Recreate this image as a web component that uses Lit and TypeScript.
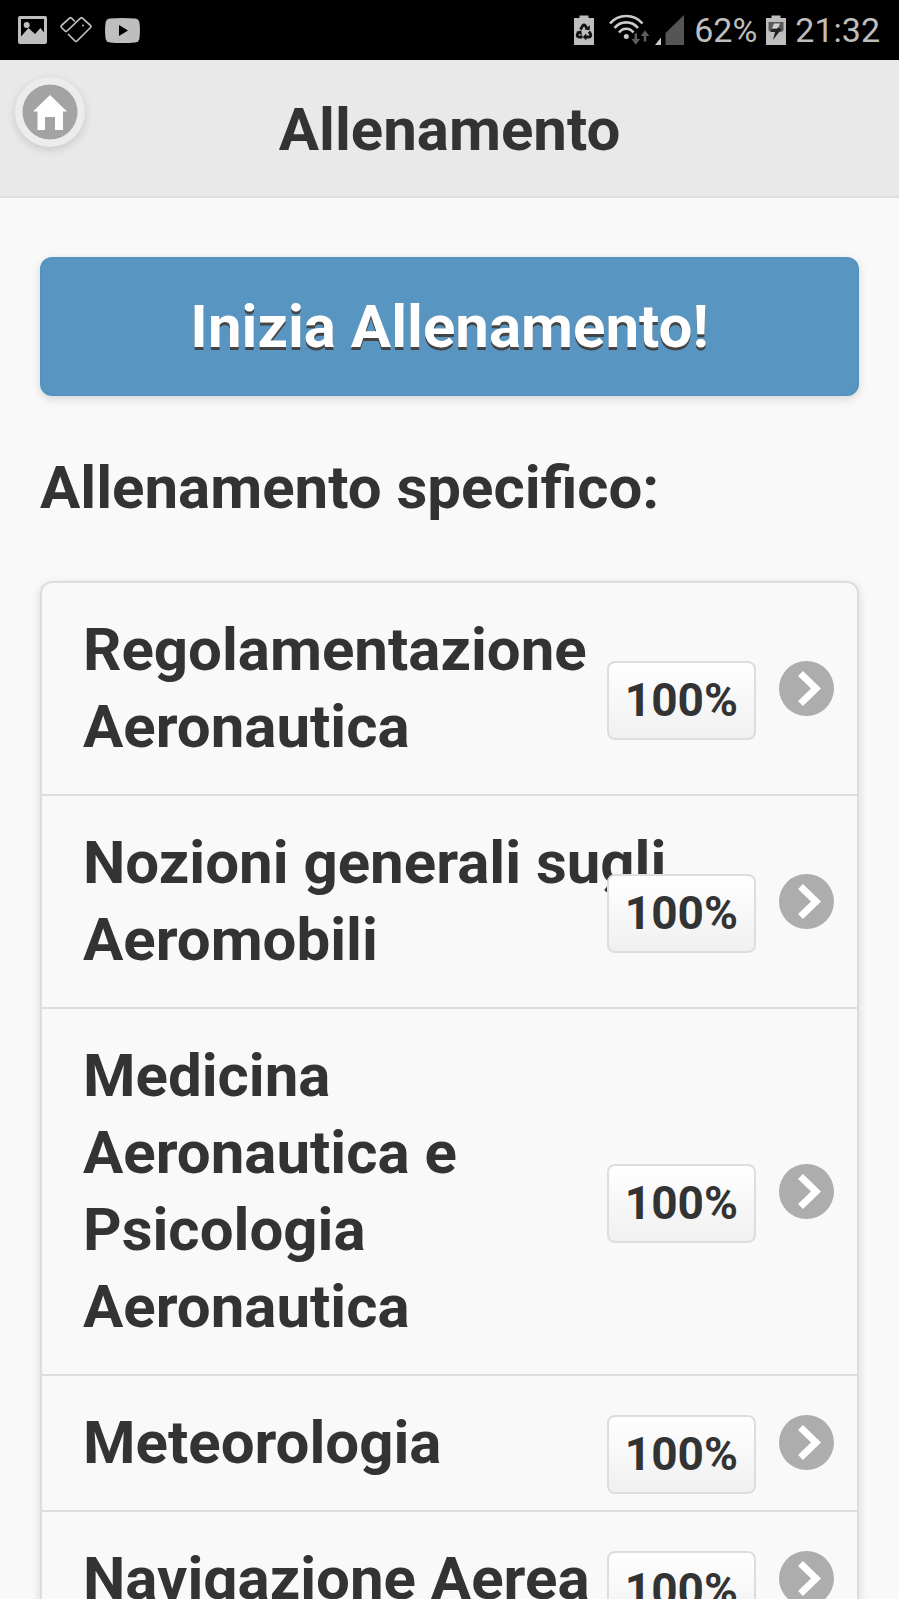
import { LitElement, html, css, svg } from "lit";
import { customElement, property } from "lit/decorators.js";

interface Topic {
  name: string;
  score: number;
}

const TOPICS: Topic[] = [
  { name: "Regolamentazione Aeronautica", score: 100 },
  { name: "Nozioni generali sugli Aeromobili", score: 100 },
  { name: "Medicina Aeronautica e Psicologia Aeronautica", score: 100 },
  { name: "Meteorologia", score: 100 },
  { name: "Navigazione Aerea", score: 100 },
];

const batteryShell = svg`<path fill="#bebebe" d="M5.500 0.500h9v2.500h5.500v27H0V3h5.500z" />`;

@customElement("status-bar")
export class StatusBar extends LitElement {
  static styles = css`
    :host {
      display: flex;
      flex: none;
      justify-content: space-between;
      align-items: center;
      height: 60px;
      padding: 0 19px 0 18px;
      box-sizing: border-box;
      background: #000;
      color: #bebebe;
      font-size: 34px;
      line-height: 40px;
    }
    .group {
      display: flex;
      align-items: center;
      gap: 13px;
    }
    .system {
      display: flex;
      align-items: center;
      gap: 9px;
    }
    .network {
      display: flex;
      gap: 5px;
    }
    .saver {
      margin-right: 5px;
    }
    svg {
      display: block;
    }
  `;

  render() {
    return html`
      <div class="group">
        <svg width="29" height="28" viewBox="0 0 29 28" aria-hidden="true">
          <rect width="29" height="28" rx="2" fill="#bebebe" />
          <path
            d="M3 3h23v13.500l-3.500-4.500-5.500 6-6.500-6L3 20.500z"
            fill="#000"
          />
          <circle cx="8.700" cy="9" r="3" fill="#bebebe" />
        </svg>
        <svg width="32" height="28" viewBox="1 0 32 28" fill="none" stroke="#bebebe" stroke-width="1.700" stroke-linejoin="round" stroke-linecap="round" aria-hidden="true">
          <path d="M15.500 5L12.500 2.200Q11.500 1.300 10.500 2.200L2.500 9.500Q1.500 10.500 2.500 11.500L6 15Q7 16 8 15L21.500 2.200Q22.500 1.300 23.500 2.200L31.500 9.500Q32.500 10.500 31.500 11.500L18 25Q17 26 16 25L9.500 18.500" />
          <circle cx="24" cy="9.500" r="1" fill="#bebebe" stroke="none" />
        </svg>
        <svg width="35" height="25" viewBox="0 0 35 25" aria-hidden="true">
          <path fill="#bebebe" d="M5 .5Q17.500-.5 30 .5Q34 .9 34.500 5Q35.400 12.500 34.500 20Q34 24 30 24.500Q17.500 25.500 5 24.500Q1 24 .5 20Q-.4 12.500 .5 5Q1 .9 5 .5z" />
          <path d="M14 7l9 5.500-9 5.500z" fill="#000" />
        </svg>
      </div>
      <div class="system">
        <svg class="saver" width="20" height="30" viewBox="0 0 20 30" aria-hidden="true">
          ${batteryShell}
          <g fill="none" stroke="#111" stroke-width="2.800">
            <path d="M6.500 14.500L8.800 10.600Q10 9 11.200 10.600L12.800 13.200" />
            <path d="M15 16.500L16.700 19.300Q17.300 21.800 15 22H11.500" />
            <path d="M8.500 22H5Q2.700 21.800 3.300 19.300L5 17" />
          </g>
          <path fill="#111" d="M10.500 14.500l5 .8.500-5zM12.300 18.200v7.400l-3.500-3.600zM2 17l5.200-1.800.8 5z" />
        </svg>
        <div class="network">
          <svg width="42" height="34" viewBox="0 0 42 34" aria-hidden="true">
            <g fill="none" stroke="#cbcbcb" stroke-width="2.700">
              <path d="M2 10.500C10.500 .5 26 .5 34.500 10.500" />
              <path d="M6.500 15C12.500 7.500 24 7.500 30 15" />
              <path d="M11 19.500C15 14.500 21.500 14.500 25.500 19.500" />
            </g>
            <circle cx="18.300" cy="23.500" r="2.500" fill="#cbcbcb" />
            <g fill="#5c5c5c">
              <path d="M26.500 20.500h2.600v5.500h3l-4.300 5.700-4.300-5.700h3z" />
              <path d="M35.700 28.500h2.600V23h3L37 17.300 32.700 23h3z" />
            </g>
          </svg>
          <svg width="30" height="34" viewBox="0 0 30 34" aria-hidden="true">
            <path d="M0 32l6-7.500V32z" fill="#cbcbcb" />
            <path d="M10.500 32V20L29 2v30z" fill="#555" />
          </svg>
        </div>
        <span>62%</span>
        <svg width="20" height="30" viewBox="0 0 20 30" aria-hidden="true">
          ${batteryShell}
          <path d="M2.500 7h15v8.500l-2 1.500h-11l-2-1.500z" fill="#5a5a5a" />
          <path d="M8 8.500h6l-2 5h-6z" fill="#d0d0d0" />
          <path d="M5.500 14h5.500l.8-1.500L15.500 14 7 25l2-8H5z" fill="#222" />
        </svg>
        <time>21:32</time>
      </div>
    `;
  }
}

@customElement("topic-list")
export class TopicList extends LitElement {
  @property({ attribute: false }) topics: Topic[] = [];

  static styles = css`
    :host {
      display: block;
    }
    .list {
      list-style: none;
      margin: 0;
      padding: 0;
      border: 2px solid #ddd;
      border-radius: 12px;
      box-shadow: 0 3px 10px rgba(0, 0, 0, 0.14);
      overflow: hidden;
    }
    .item + .item {
      border-top: 2px solid #ddd;
    }
    .link {
      position: relative;
      display: block;
      padding: 28px 190px 29px 41px;
      color: #333;
      text-decoration: none;
    }
    .count {
      position: absolute;
      top: 50%;
      right: 101px;
      margin-top: -28px;
      padding: 7px 16px;
      border: 2px solid #ddd;
      border-radius: 8px;
      background: linear-gradient(#fff, #f0f0f0);
      font-size: 46px;
      line-height: 61px;
    }
    .arrow {
      position: absolute;
      top: 50%;
      right: 23px;
      margin-top: -28px;
    }
  `;

  render() {
    return html`
      <ul class="list">
        ${this.topics.map(
          (topic) => html`
            <li class="item">
              <a class="link" href="#">
                ${topic.name}
                <span class="count">${topic.score}%</span>
                <svg class="arrow" width="55" height="55" viewBox="0 0 55 55" aria-hidden="true">
                  <circle cx="27.500" cy="27.500" r="27.500" fill="#adadad" />
                  <path d="M21.500 12.500L37 27.500L21.500 42.500" fill="none" stroke="#fff" stroke-width="7" />
                </svg>
              </a>
            </li>
          `
        )}
      </ul>
    `;
  }
}

@customElement("app-root")
export class AppRoot extends LitElement {
  static styles = css`
    :host {
      display: flex;
      flex-direction: column;
      height: 100vh;
      background: #f9f9f9;
      color: #333;
      font-family: Roboto, "Liberation Sans", sans-serif;
    }
    .page {
      flex: 1;
      min-height: 0;
      overflow-y: auto;
      scrollbar-width: none;
      font-size: 60px;
      font-weight: 700;
      line-height: 77px;
    }
    .header {
      display: grid;
      grid-template-columns: 1fr auto 1fr;
      align-items: start;
      background: #e9e9e9;
      border-bottom: 2px solid #ddd;
    }
    .title {
      margin: 0;
      padding: 31px 0 28px;
      font-size: inherit;
    }
    .home {
      display: flex;
      width: 70px;
      height: 70px;
      margin: 17px 0 0 15px;
      align-items: center;
      justify-content: center;
      border-radius: 50%;
      background: #ececec;
      box-shadow: 0 3px 10px rgba(0, 0, 0, 0.14);
    }
    .content {
      padding: 59px 40px;
    }
    .start {
      display: block;
      width: 100%;
      padding: 29px 40px;
      border: 2px solid #5393c0;
      border-radius: 12px;
      background: #5895c0;
      box-shadow: 0 3px 10px rgba(0, 0, 0, 0.14);
      color: #fff;
      font: inherit;
      text-shadow: 0 3px 0 #444;
      cursor: pointer;
    }
    .subtitle {
      margin: 53px 0 55px;
      font-size: inherit;
    }
  `;

  render() {
    return html`
      <status-bar></status-bar>
      <div class="page">
        <header class="header">
          <a class="home" href="#" aria-label="Home">
            <svg width="56" height="56" viewBox="0 0 56 56" aria-hidden="true">
              <circle cx="28" cy="28" r="27.500" fill="#a3a3a3" />
              <path fill="#fff" d="M28 11L45 27.500H41V46H33V33H23V46H15.500V27.500H11z" />
            </svg>
          </a>
          <h1 class="title">Allenamento</h1>
        </header>
        <main class="content">
          <button class="start" type="button">Inizia Allenamento!</button>
          <h2 class="subtitle">Allenamento specifico:</h2>
          <topic-list .topics=${TOPICS}></topic-list>
        </main>
      </div>
    `;
  }
}
